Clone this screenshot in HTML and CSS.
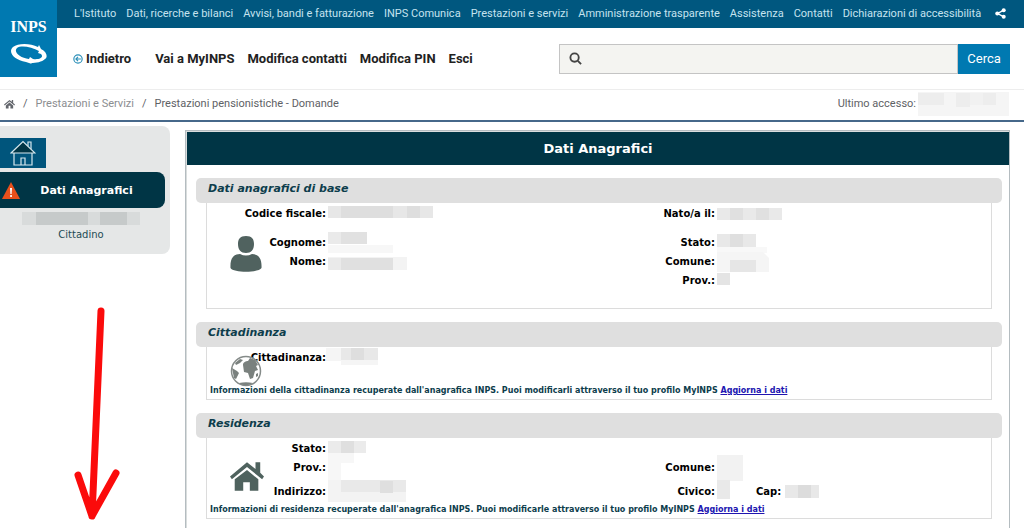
FILE: index.html
```html
<!DOCTYPE html>
<html lang="it">
<head>
<meta charset="utf-8">
<title>INPS - Dati Anagrafici</title>
<link rel="stylesheet" href="styles.css">
</head>
<body>
<header class="site-header">
  <a class="logo" href="#" aria-label="INPS">
    <span class="logo-text">INPS</span>
    <svg class="logo-mark" viewBox="0 0 38 20" aria-hidden="true">
      <path fill="#fff" fill-rule="evenodd" d="M3 3C8-1 20-1 28 3l1-2 2 4c6 3 7 8 4 10-3 3-9 4-14 4l1 1-6-2C7 16 1 12 1 7c0-2 1-3 2-4zM7 4C3 8 10 14 19 15l1-2 3 2c7 1 11-2 8-5l-3-1 1-2C22 3 11 1 7 4z"/>
    </svg>
  </a>
  <nav class="topbar" aria-label="Istituzionale">
    <a href="#">L'Istituto</a>
    <a href="#">Dati, ricerche e bilanci</a>
    <a href="#">Avvisi, bandi e fatturazione</a>
    <a href="#">INPS Comunica</a>
    <a href="#">Prestazioni e servizi</a>
    <a href="#">Amministrazione trasparente</a>
    <a class="push" href="#">Assistenza</a>
    <a href="#">Contatti</a>
    <a href="#">Dichiarazioni di accessibilità</a>
    <a class="share" href="#" aria-label="Condividi">
      <svg viewBox="0 0 12 12" width="11" height="11" aria-hidden="true"><path d="M9 2.500 3 6l6 3.500" fill="none" stroke="#fff" stroke-width="1.500"/><g fill="#fff"><circle cx="9.500" cy="2.400" r="2.200"/><circle cx="2.500" cy="6" r="2.200"/><circle cx="9.500" cy="9.600" r="2.200"/></g></svg>
    </a>
  </nav>
  <div class="mainbar">
    <nav class="mainnav" aria-label="Principale">
      <a class="back" href="#"><svg viewBox="0 0 12 12" width="10" height="10" aria-hidden="true"><g fill="none" stroke="#2b8fb8" stroke-width="1.400"><circle cx="6" cy="6" r="5"/><path d="M9.500 6H3.500M6 3.500 3.500 6 6 8.500"/></g></svg>Indietro</a>
      <a href="#">Vai a MyINPS</a>
      <a href="#">Modifica contatti</a>
      <a href="#">Modifica PIN</a>
      <a href="#">Esci</a>
    </nav>
    <form class="search">
      <label class="search-box">
        <svg viewBox="0 0 14 14" width="13" height="13" aria-hidden="true"><g fill="none" stroke="#444" stroke-width="2"><circle cx="6" cy="6" r="4.500"/><path d="m9.500 9.500 3.500 3.500"/></g></svg>
        <input type="text" aria-label="Cerca nel sito">
      </label>
      <button type="button">Cerca</button>
    </form>
  </div>
</header>

<div class="crumbbar">
  <nav class="crumbs" aria-label="Percorso">
    <a href="#" aria-label="Home"><svg viewBox="0 0 24 20" width="11" height="10" aria-hidden="true"><path fill="#63666c" d="M12 1 0 11l1.500 2L12 4.500 22.500 13l1.500-2-4-3.400V1h-3v4.200zM12 6.500 4 13v7h6v-6h4v6h6v-7z"/></svg></a>
    <span>/</span>
    <a class="muted" href="#">Prestazioni e Servizi</a>
    <span>/</span>
    <span>Prestazioni pensionistiche - Domande</span>
  </nav>
  <div class="access">Ultimo accesso:
    <svg viewBox="0 0 91 24" width="91" height="24" aria-hidden="true"><path fill="#f5f5f5" d="M0 0h91v24H0z"/><path fill="#ededed" d="M0 1h26v12H0zM38 1h14v14H38zM65 1h13v12H65z"/><path fill="#f1f1f1" d="M52 1h13v12H52z"/></svg>
  </div>
</div>

<div class="layout">
  <aside class="side">
    <div class="side-card">
      <a class="home-tile" href="#" aria-label="Home">
        <svg viewBox="0 0 26 26" width="26" height="26" aria-hidden="true"><g fill="none" stroke="#d5e8ee" stroke-width="1.200"><path d="M18 6V2h3v7M4 13v12h18V13M11 25v-7h4v7"/><path fill="#003545" d="M1 13 13 1.500 25 13z"/></g></svg>
      </a>
      <button class="side-item" type="button">
        <svg viewBox="0 0 18 17" width="18" height="17" aria-hidden="true"><path fill="#e9501c" d="M9 0 18 17H0z"/><path fill="#fff" d="M8 6h2l-.4 6H8.400zM8.200 13h1.700v2H8.200z"/></svg>
        <span>Dati Anagrafici</span>
      </button>
      <div class="side-user">
        <svg viewBox="0 0 118 13" width="118" height="13" aria-hidden="true"><path fill="#d8dbdb" d="M0 0h118v13H0z"/><path fill="#c6caca" d="M14 0h52v13H14zM78 0h27v13H78z"/></svg>
        <span>Cittadino</span>
      </div>
    </div>
    <svg class="arrow" viewBox="0 0 50 216" width="50" height="216" aria-hidden="true"><path d="M29 6 20 211M6 170l14 41 24-43" fill="none" stroke="#fb0b0b" stroke-width="7" stroke-linecap="round" stroke-linejoin="round"/></svg>
  </aside>

  <main class="panel">
    <h1>Dati Anagrafici</h1>

    <section>
      <h2>Dati anagrafici di base</h2>
      <div class="box tall">
        <svg class="box-icon" viewBox="0 0 32 36" width="32" height="36" aria-hidden="true"><path fill="#50625f" d="M16 0c6 0 8 3 8 8 0 6-3 9-8 9s-8-3-8-9c0-5 2-8 8-8zM10 18c4 2 8 2 12 0 7 0 10 5 9.500 14-3 5-28 5-31 0C0 23 3 18 10 18z"/></svg>
        <div class="row">
          <span class="label">Codice fiscale:</span>
          <svg class="mask" viewBox="0 0 106 19" width="106" height="19" aria-hidden="true"><path fill="#e7e7e7" d="M0 2h105v12H0z"/><path fill="#dedede" d="M13 2h52v12H13zM79 2h13v12H79z"/></svg>
          <span class="label">Nato/a il:</span>
          <svg class="mask" viewBox="0 0 66 19" width="66" height="19" aria-hidden="true"><path fill="#e9e9e9" d="M0 4h65v12H0z"/><path fill="#e0e0e0" d="M13 4h13v12H13zM39 4h13v12H39z"/></svg>
        </div>
        <div class="row spaced">
          <span class="label">Cognome:</span>
          <svg class="mask" viewBox="0 0 80 19" width="80" height="19" aria-hidden="true"><path fill="#f7f7f7" d="M0 12h65v8H0z"/><path fill="#eaeaea" d="M0-1h39v12H0z"/><path fill="#e1e1e1" d="M13-1h26v12H13z"/></svg>
          <span class="label">Stato:</span>
          <svg class="mask" viewBox="0 0 60 19" width="60" height="19" aria-hidden="true"><path fill="#f8f8f8" d="M0 14h50v6H0z"/><path fill="#e8e8e8" d="M0 1h39v13H0z"/><path fill="#dfdfdf" d="M13 1h13v13H13z"/></svg>
        </div>
        <div class="row">
          <span class="label">Nome:</span>
          <svg class="mask" viewBox="0 0 80 19" width="80" height="19" aria-hidden="true"><path fill="#f3f3f3" d="M0 5h79v13H0z"/><path fill="#e0e0e0" d="M13 6h52v12H13z"/><path fill="#eaeaea" d="M0 6h13v12H0z"/></svg>
          <span class="label">Comune:</span>
          <svg class="mask" viewBox="0 0 60 19" width="60" height="19" aria-hidden="true"><path fill="#f5f5f5" d="M0 0h46l6 6v14H0z"/><path fill="#e6e6e6" d="M13 8h26v12H13z"/></svg>
        </div>
        <div class="row">
          <span></span><span></span>
          <span class="label">Prov.:</span>
          <svg class="mask" viewBox="0 0 20 19" width="20" height="19" aria-hidden="true"><path fill="#e4e4e4" d="M0 2h13v12H0z"/></svg>
        </div>
      </div>
    </section>

    <section>
      <h2>Cittadinanza</h2>
      <div class="box">
        <svg class="box-icon" viewBox="0 0 32 32" width="32" height="32" aria-hidden="true"><circle cx="16" cy="16" r="14.500" fill="#fff" stroke="#858b89" stroke-width="1.500"/><path fill="#7a817e" d="M13 10c0-3 3-4 5-4l2-3 5 2 3 5-2 1 2 4-3 1-2 7-3 1-2-6-4-1zM2 13l5 3 2 2-3 6-2-1zM5 8l5-4 3 1-3 3-4 2zM26 19l2-1v3l-2 1zM9 28c5-1 9-1 14 0-5 3-10 3-14 0z"/></svg>
        <div class="row">
          <span class="label">Cittadinanza:</span>
          <svg class="mask" viewBox="0 0 60 19" width="60" height="19" aria-hidden="true"><path fill="#f5f5f5" d="M-2 0h52v17H13v-4H-2z"/><path fill="#e8e8e8" d="M13 0h37v12H13z"/><path fill="#dedede" d="M23 0h13v12H23z"/></svg>
        </div>
        <p class="note">Informazioni della cittadinanza recuperate dall'anagrafica INPS. Puoi modificarli attraverso il tuo profilo MyINPS <a href="#">Aggiorna i dati</a></p>
      </div>
    </section>

    <section>
      <h2>Residenza</h2>
      <div class="box large">
        <svg class="box-icon" viewBox="0 0 36 30" width="34" height="29" aria-hidden="true"><path fill="#4f625e" d="M18 0 0 15l2 3L18 5l16 13 2-3-4-4V0h-5v7zM18 8 5 18v12h9v-9h7v9h9V18z"/></svg>
        <div class="row">
          <span class="label">Stato:</span>
          <svg class="mask" viewBox="0 0 60 19" width="60" height="19" aria-hidden="true"><path fill="#ebebeb" d="M0 2h38v12H0z"/><path fill="#dfdfdf" d="M13 2h13v12H13z"/></svg>
        </div>
        <div class="row">
          <span class="label">Prov.:</span>
          <svg class="mask" viewBox="0 0 40 19" width="40" height="19" aria-hidden="true"><path fill="#f7f7f7" d="M0-5h26V5H13v17H0z"/></svg>
          <span class="label">Comune:</span>
          <svg class="mask" viewBox="0 0 40 19" width="40" height="19" aria-hidden="true"><path fill="#f2f2f2" d="M0-3h26v26H0z"/></svg>
        </div>
        <div class="row gap">
          <span class="label">Indirizzo:</span>
          <svg class="mask" viewBox="0 0 80 19" width="80" height="19" aria-hidden="true"><path fill="#f3f3f3" d="M0-2h78v22H0z"/><path fill="#e9e9e9" d="M13-2h65V10H13z"/><path fill="#dfdfdf" d="M52-1h13v12H52z"/></svg>
          <span class="label">Civico:</span>
          <div class="pair">
            <svg class="mask" viewBox="0 0 14 19" width="14" height="19" aria-hidden="true"><path fill="#e9e9e9" d="M0-2h13v19H0z"/></svg>
            <span class="label">Cap:</span>
            <svg class="mask" viewBox="0 0 34 19" width="34" height="19" aria-hidden="true"><path fill="#e8e8e8" d="M0 3h34v13H0z"/><path fill="#dcdcdc" d="M13 3h13v13H13z"/></svg>
          </div>
        </div>
        <p class="note">Informazioni di residenza recuperate dall'anagrafica INPS. Puoi modificarle attraverso il tuo profilo MyINPS <a href="#">Aggiorna i dati</a></p>
      </div>
    </section>
  </main>
</div>
</body>
</html>
```
FILE: styles.css
```css
* { box-sizing: border-box; }
body {
  margin: 0;
  min-height: 100vh;
  display: flex;
  flex-direction: column;
  background: #fff;
  color: #000;
  font-family: Roboto, "Open Sans", sans-serif;
  font-size: 11px;
}
a { color: inherit; text-decoration: none; }
h1, h2, p { margin: 0; }
svg { display: block; flex: none; }

.site-header {
  display: grid;
  grid-template-columns: 57px 1fr;
  grid-template-rows: 28px 61px;
  border-bottom: 1px solid #ededed;
}
.logo {
  grid-row: 1 / 3;
  height: 77px;
  background: #0079b1;
  color: #fff;
  display: flex;
  flex-direction: column;
  align-items: center;
  padding-top: 10px;
}
.logo-text {
  font: bold 16px/34px "Liberation Serif", serif;
}
.logo-mark { width: 38px; height: 20px; }
.topbar {
  background: #00577f;
  color: #c5e3ef;
  display: flex;
  align-items: center;
  gap: 10px;
  padding: 0 18px 2px 17px;
  white-space: nowrap;
}
.topbar .push { margin-left: auto; }
.topbar .share { margin-left: 4px; }
.mainbar {
  display: flex;
  align-items: center;
  justify-content: space-between;
  padding: 0 14px 0 16px;
}
.mainnav {
  display: flex;
  gap: 13px;
  font-weight: bold;
  font-size: 13px;
  color: #222;
  white-space: nowrap;
}
.back { display: flex; align-items: center; gap: 3px; margin-right: 11px; }
.search { display: flex; width: 451px; height: 30px; }
.search-box {
  flex: 1;
  display: flex;
  align-items: center;
  padding-left: 9px;
  background: #f4f4f1;
  border: 1px solid #c4c4c4;
}
.search-box input { flex: 1; min-width: 0; border: 0; background: none; outline: none; font: inherit; }
.search button {
  width: 52px;
  padding: 0;
  border: 0;
  background: #0079b1;
  color: #fff;
  font: 13px Roboto, sans-serif;
}

.crumbbar {
  display: flex;
  align-items: center;
  justify-content: space-between;
  height: 32px;
  padding: 0 15px 3px 4px;
  border-bottom: 2px solid #46688a;
  color: #5e6165;
}
.crumbs { display: flex; align-items: center; gap: 8px; }
.muted { color: #8b8d90; }
.access { display: flex; align-items: center; gap: 2px; }

.layout {
  flex: 1;
  display: flex;
  gap: 15px;
  padding: 4px 14px 0 0;
  font-family: "DejaVu Sans", sans-serif;
}
.side { width: 170px; flex: none; }
.side-card {
  height: 128px;
  padding-top: 12px;
  background: #e5e7e7;
  border-radius: 0 8px 8px 0;
}
.home-tile {
  display: grid;
  place-items: center;
  width: 46px;
  height: 30px;
  background: #00557c;
}
.side-item {
  display: flex;
  align-items: center;
  width: 165px;
  height: 36px;
  margin-top: 4px;
  padding: 0 0 0 2px;
  border: 0;
  border-radius: 0 8px 8px 0;
  background: #003545;
  color: #fff;
  font: bold 11px "DejaVu Sans", sans-serif;
}
.side-item span { flex: 1; padding-right: 12px; text-align: center; }
.side-user {
  display: flex;
  flex-direction: column;
  align-items: center;
  gap: 3px;
  padding: 4px 8px 0 0;
  color: #1d4b55;
  font-size: 10px;
  line-height: 14px;
}
.arrow { margin: 51px 0 0 72px; }

.panel {
  flex: 1;
  min-width: 0;
  margin-top: 4px;
  border: 1px solid #b4bcc0;
  border-bottom: 0;
  box-shadow: inset 1px 1px #d9dddd;
}
.panel h1 {
  margin: 1px 0 13px 1px;
  background: #003545;
  color: #fff;
  font-size: 13px;
  line-height: 33px;
  text-align: center;
}
.panel section { margin: 0 7px 13px 10px; }
.panel h2 {
  height: 25px;
  padding-left: 12px;
  border-radius: 5px;
  background: #dfdfdf;
  color: #0d3d4c;
  font-size: 11px;
  font-style: italic;
  line-height: 21px;
}
.box {
  position: relative;
  display: flex;
  flex-direction: column;
  min-height: 53px;
  margin: 0 10px;
  padding: 1px 0 2px;
  border: 1px solid #dcdcdc;
  border-top: 0;
}
.box.tall { min-height: 106px; }
.box.large { min-height: 81px; }
.box-icon { position: absolute; left: 23px; bottom: 12px; }
.box.tall .box-icon { bottom: 36px; }
.box.large .box-icon { bottom: 27px; }
.row {
  display: grid;
  grid-template-columns: 119px 1fr 118px 276px;
  align-items: center;
  height: 19px;
}
.row.spaced { margin-top: 10px; }
.row.gap { margin-top: 5px; }
.label { font-size: 10px; font-weight: bold; text-align: right; white-space: nowrap; }
.mask { overflow: visible; margin-left: 2px; }
.pair { display: flex; align-items: center; }
.pair .label { margin: 0 2px 0 25px; }
.note {
  margin-top: auto;
  padding-left: 3px;
  color: #0d3d4c;
  font-size: 8px;
  font-weight: bold;
  line-height: 12px;
}
.note a { color: #2015b0; text-decoration: underline; }
```
